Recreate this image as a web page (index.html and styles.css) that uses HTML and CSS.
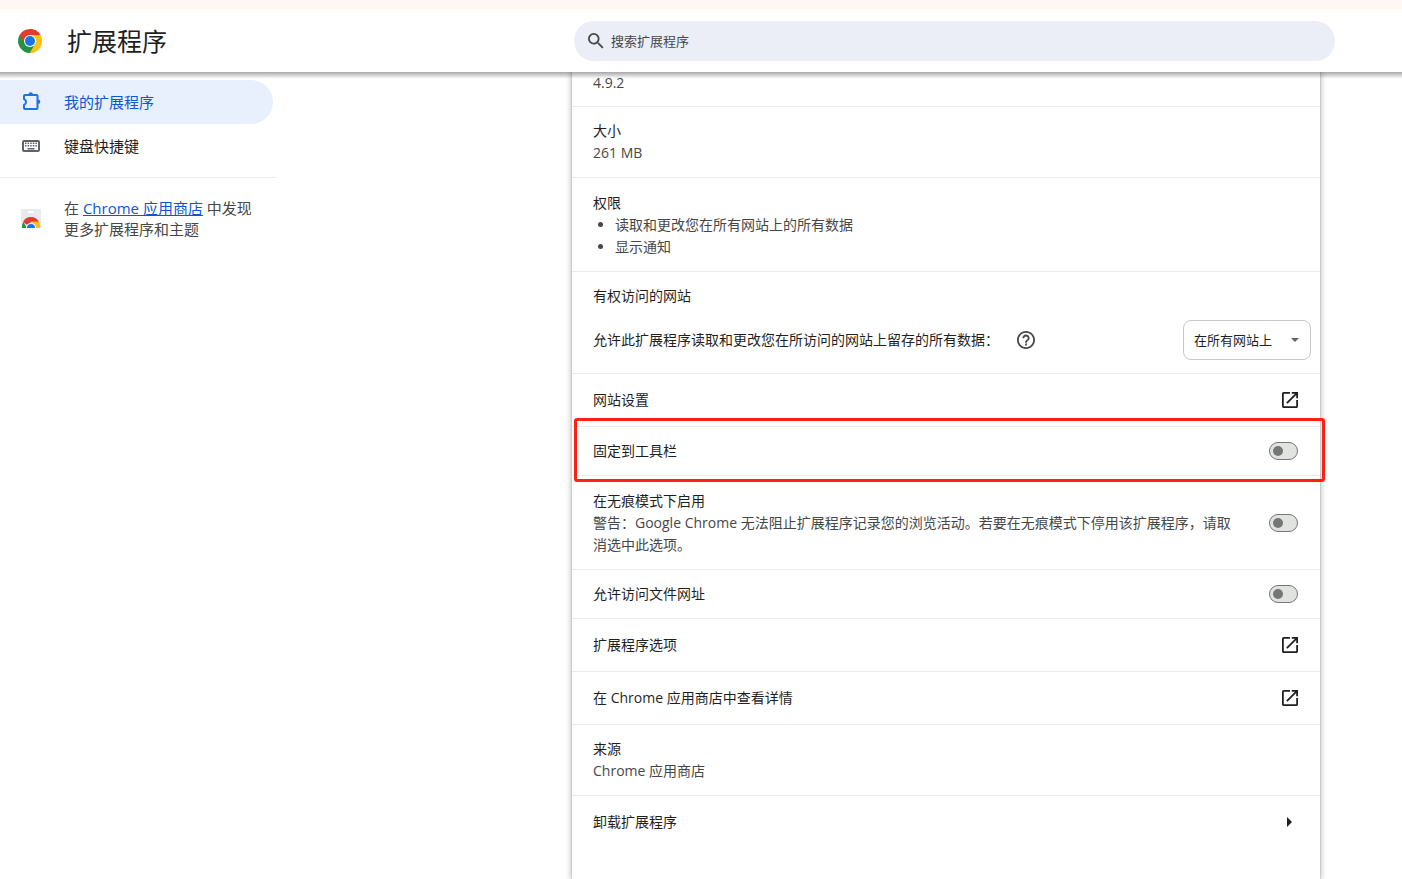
FILE: index.html
```html
<!DOCTYPE html>
<html lang="zh-CN">
<head>
<meta charset="utf-8">
<title>扩展程序</title>
<link rel="stylesheet" href="styles.css">
</head>
<body>
<svg class="defs" aria-hidden="true">
  <symbol id="open" viewBox="3 3 18 18"><path d="M19 19H5V5h7V3H5c-1.1 0-2 .9-2 2v14c0 1.100.9 2 2 2h14c1.100 0 2-.9 2-2v-7h-2v7zM14 3v2h3.590l-9.830 9.830 1.410 1.410L19 6.410V10h2V3h-7z"/></symbol>
</svg>
<header class="toolbar">
  <div class="brand">
    <svg class="logo" viewBox="0 0 48 48" aria-hidden="true">
      <path fill="#e33b2e" d="M24 24 3.220 12A24 24 0 0 1 44.780 12Z"/>
      <path fill="#fbc116" d="M24 24 44.780 12A24 24 0 0 1 24 48Z"/>
      <path fill="#229342" d="M24 48A24 24 0 0 1 3.220 12L24 24Z"/>
      <path fill="#e33b2e" d="M3.220 12 13.610 30 24 24V12Z"/>
      <path fill="#229342" d="M13.610 30 24 48 34.390 30 24 24Z"/>
      <path fill="#fbc116" d="M24 48 34.390 30 24 12H44.780A24 24 0 0 1 24 48Z"/>
      <path fill="#e33b2e" d="M24 12H44.780A24 24 0 0 0 24 0Z"/>
      <circle cx="24" cy="24" r="12" fill="#fff"/>
      <circle cx="24" cy="24" r="10" fill="#1a73e8"/>
    </svg>
    <h1 class="title">扩展程序</h1>
  </div>
  <label class="search">
    <svg class="search-icon" viewBox="3 3 18 18" aria-hidden="true"><path d="M15.500 14h-.790l-.280-.270A6.470 6.470 0 0 0 16 9.500 6.500 6.500 0 1 0 9.500 16c1.610 0 3.090-.590 4.230-1.570l.270.280v.790l5 4.990L20.490 19l-4.990-5zm-6 0C7.010 14 5 11.990 5 9.500S7.010 5 9.500 5 14 7.010 14 9.500 11.990 14 9.500 14z"/></svg>
    <input class="search-input" type="search" placeholder="搜索扩展程序" aria-label="搜索扩展程序">
  </label>
</header>
<div class="page">
  <nav class="sidebar">
    <a class="nav-item active" href="#extensions">
      <svg class="nav-icon" viewBox="0 0 20 20" aria-hidden="true"><path fill="none" stroke="currentColor" stroke-width="2" stroke-linejoin="round" d="M4 3H15.500Q16.500 3 16.500 4V16Q16.500 17 15.500 17H4Q3 17 3 16V13Q5 12.300 5 10T3 7V4Q3 3 4 3Z"/><path d="M7.500 2.500a2.200 2.200 0 0 1 4.400 0zM17 7.500a2.300 2.300 0 0 1 0 4.600z"/></svg>
      <span>我的扩展程序</span>
    </a>
    <a class="nav-item" href="#shortcuts">
      <svg class="nav-icon" viewBox="0 0 20 20" aria-hidden="true"><rect x="2" y="5" width="16" height="10" rx="1" fill="none" stroke="currentColor" stroke-width="2"/><path d="M4 6.500h1.500V8H4zm2.600 0h1.500V8H6.600zm2.600 0h1.500V8H9.200zm2.600 0h1.500V8h-1.500zm2.600 0h1.500V8h-1.500zM4 9h1.500v1.500H4zm2.600 0h1.500v1.500H6.600zm2.600 0h1.500v1.500H9.200zm2.600 0h1.500v1.500h-1.500zm2.600 0h1.500v1.500h-1.500zM6.500 12h7v1.500h-7z"/></svg>
      <span>键盘快捷键</span>
    </a>
    <div class="store">
      <svg class="nav-icon" viewBox="0 0 20 20" aria-hidden="true">
        <path fill="#e8eaed" d="M0 0h20v18q0 1-1 1H1q-1 0-1-1z"/>
        <rect x="7" y="2" width="6" height="2" rx="1" fill="#fff"/>
        <path fill="#229342" d="M1 19a9 9 0 0 1 1.300-6L6 19z"/>
        <path fill="#e33b2e" d="M2 13a9 9 0 0 1 16 0h-8l-4 3z"/>
        <path fill="#fbc116" d="M10 12.500h7.800A9 9 0 0 1 19 19h-5z"/>
        <path fill="#fff" d="M5 19a5 5 0 1 1 10 0z"/>
        <path fill="#1a73e8" d="M6 19a4 4 0 1 1 8 0z"/>
      </svg>
      <p class="store-text">在 <a href="#store">Chrome 应用商店</a> 中发现更多扩展程序和主题</p>
    </div>
  </nav>
  <main class="content">
    <div class="card">
      <section class="row version"><p class="value">4.9.2</p></section>
      <section class="row"><div><h2 class="label">大小</h2><p class="value">261 MB</p></div></section>
      <section class="row tall"><div><h2 class="label">权限</h2>
        <ul class="permissions"><li>读取和更改您在所有网站上的所有数据</li><li>显示通知</li></ul></div></section>
      <section class="row access">
        <h2 class="label">有权访问的网站</h2>
        <div class="access-line">
          <label class="label" for="host-access">允许此扩展程序读取和更改您在所访问的网站上留存的所有数据：</label>
          <a class="help" href="#help" aria-label="了解详情"><svg viewBox="2 2 20 20" aria-hidden="true"><path d="M11 18h2v-2h-2v2zm1-16C6.480 2 2 6.480 2 12s4.480 10 10 10 10-4.480 10-10S17.520 2 12 2zm0 18c-4.410 0-8-3.590-8-8s3.590-8 8-8 8 3.590 8 8-3.590 8-8 8zm0-14c-2.210 0-4 1.790-4 4h2c0-1.100.9-2 2-2s2 .9 2 2c0 2-3 1.750-3 5h2c0-2.250 3-2.500 3-5 0-2.210-1.790-4-4-4z"/></svg></a>
          <div class="select-box">
            <select class="select" id="host-access"><option>在所有网站上</option><option>点击时</option></select>
            <svg class="caret" viewBox="0 0 8 4" aria-hidden="true"><path d="M0 0h8L4 4z"/></svg>
          </div>
        </div>
      </section>
      <button class="row link-row" type="button"><span class="label">网站设置</span><svg class="end-icon"><use href="#open"/></svg></button>
      <section class="row highlighted"><label class="label" for="pin">固定到工具栏</label><input class="toggle" id="pin" type="checkbox" role="switch"></section>
      <section class="row tall"><div class="warning"><label class="label" for="incognito">在无痕模式下启用</label><p class="value">警告：Google Chrome 无法阻止扩展程序记录您的浏览活动。若要在无痕模式下停用该扩展程序，请取消选中此选项。</p></div><input class="toggle" id="incognito" type="checkbox" role="switch"></section>
      <section class="row"><label class="label" for="files">允许访问文件网址</label><input class="toggle" id="files" type="checkbox" role="switch"></section>
      <button class="row link-row" type="button"><span class="label">扩展程序选项</span><svg class="end-icon"><use href="#open"/></svg></button>
      <button class="row link-row" type="button"><span class="label">在 Chrome 应用商店中查看详情</span><svg class="end-icon"><use href="#open"/></svg></button>
      <section class="row"><div><h2 class="label">来源</h2><p class="value">Chrome 应用商店</p></div></section>
      <button class="row link-row" type="button"><span class="label">卸载扩展程序</span><svg class="end-icon" viewBox="0 0 16 16" aria-hidden="true"><path d="M5 3l5 5-5 5z"/></svg></button>
    </div>
  </main>
</div>
</body>
</html>
```
FILE: styles.css
```css
* { box-sizing: border-box; }

body {
  margin: 0;
  min-height: 100vh;
  display: flex;
  flex-direction: column;
  border-top: 10px solid #fff7f4;
  background: #fff;
  color: #1f1f1f;
  font-family: "Open Sans", "Noto Sans CJK SC", sans-serif;
  font-size: 14px;
  line-height: 22px;
}

h1, h2, p, ul { margin: 0; padding: 0; font-weight: 400; }
button, input, select { font: inherit; color: inherit; }
svg { display: block; flex: none; fill: currentColor; }
.defs { display: none; }

.toolbar {
  position: relative;
  z-index: 2;
  display: flex;
  align-items: center;
  height: 62px;
  padding-right: 67px;
  background: #fff;
}
.toolbar::after {
  content: "";
  position: absolute;
  top: 100%;
  left: 0;
  right: 0;
  height: 6px;
  background: linear-gradient(rgba(0, 0, 0, 0.34), rgba(0, 0, 0, 0.04));
}
.brand {
  display: flex;
  align-items: center;
  gap: 25px;
  width: 574px;
  padding-left: 18px;
}
.logo { width: 24px; height: 24px; }
.title { font-size: 25px; line-height: 36px; }

.search {
  flex: 1;
  display: flex;
  align-items: center;
  gap: 7px;
  height: 40px;
  padding: 0 14px;
  border-radius: 20px;
  background: #ebeef7;
  color: #474747;
}
.search-icon { width: 16px; height: 16px; }
.search-input {
  flex: 1;
  min-width: 0;
  padding: 0;
  border: 0;
  outline: 0;
  background: none;
  font-size: 13px;
}
.search-input::placeholder { color: #474747; opacity: 1; }

.page { flex: 1; display: flex; }

.sidebar { width: 276px; flex: none; padding-top: 8px; font-size: 15px; line-height: 21px; }
.nav-item {
  display: flex;
  align-items: center;
  gap: 23px;
  height: 44px;
  margin-right: 3px;
  padding-left: 21px;
  border-radius: 0 22px 22px 0;
  color: #1f1f1f;
  text-decoration: none;
}
.nav-item.active { background: #e8effd; color: #0b57d0; }
.nav-icon { width: 20px; height: 20px; color: #5f6368; }
.active .nav-icon { color: #1a73e8; }
.store {
  display: flex;
  align-items: center;
  gap: 23px;
  margin-top: 9px;
  padding: 20px 20px 20px 21px;
  border-top: 1px solid #ebebeb;
  color: #474747;
}
.store-text a { color: #0b57d0; }

.content { flex: 1; min-width: 0; display: flex; padding: 0 82px 0 296px; }
.card { flex: 1; min-width: 0; box-shadow: 0 0 1px rgba(0, 0, 0, 0.4), 0 0 6px 1px rgba(0, 0, 0, 0.26); }

.row {
  position: relative;
  display: flex;
  align-items: center;
  justify-content: space-between;
  gap: 26px;
  width: 100%;
  min-height: 49px;
  padding: 13px 22px 13px 21px;
  border: 0;
  border-bottom: 1px solid #ebebeb;
  background: none;
  text-align: left;
}
.row:last-child { border-bottom-color: transparent; }
.version { min-height: 0; padding-top: 0; padding-bottom: 12px; }
.tall { min-height: 94px; }
.link-row { min-height: 53px; cursor: pointer; }
.label { display: block; font-size: 14px; line-height: 22px; }
.value { color: #474747; }
.permissions { padding-left: 22px; color: #474747; }
.end-icon { width: 16px; height: 16px; }

.access { flex-direction: column; align-items: stretch; gap: 13px; padding-right: 9px; }
.access-line { display: flex; align-items: center; gap: 18px; }
.help { color: #474747; }
.help svg { width: 18px; height: 18px; }
.select-box { position: relative; margin-left: auto; }
.select {
  appearance: none;
  display: block;
  width: 128px;
  height: 40px;
  padding: 0 10px;
  border: 1px solid #c7c7c7;
  border-radius: 8px;
  background: #fff;
  font-size: 13px;
}
.caret {
  position: absolute;
  top: 18px;
  right: 12px;
  width: 8px;
  height: 4px;
  color: #5f6368;
  pointer-events: none;
}

.toggle {
  appearance: none;
  flex: none;
  display: flex;
  align-items: center;
  width: 29px;
  height: 18px;
  margin: 0;
  padding-left: 3px;
  border: 1px solid #747775;
  border-radius: 9px;
  background: #e1e3e1;
}
.toggle::before {
  content: "";
  width: 10px;
  height: 10px;
  border-radius: 50%;
  background: #747775;
}
.toggle:checked { justify-content: flex-end; padding: 0 3px; background: #0b57d0; }

.highlighted::after {
  content: "";
  position: absolute;
  z-index: 1;
  inset: -9px -5px -7px 2px;
  border: 3px solid #ff2015;
  border-radius: 3px;
  pointer-events: none;
}
```
